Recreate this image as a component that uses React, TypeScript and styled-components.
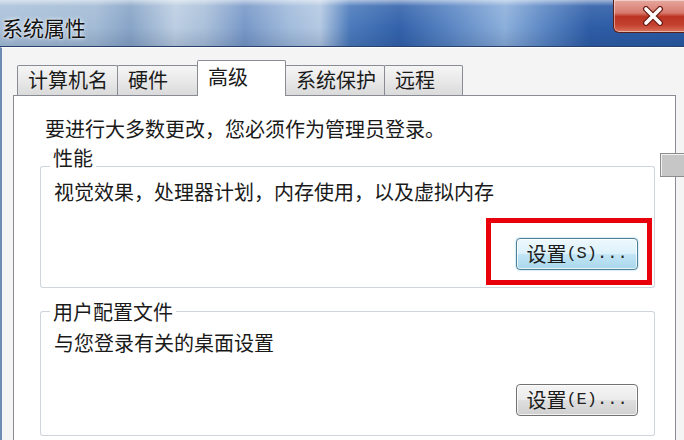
import React from 'react'
import styled, { createGlobalStyle } from 'styled-components'

const CJK = '"Noto Sans CJK SC", "Noto Sans", sans-serif'
const LINE = '#cfd5db'

const GlobalStyle = createGlobalStyle`
  html, body { margin: 0; padding: 0; }
  body { width: 684px; height: 440px; overflow: hidden; background: #f4f4f4; }
`

const Window = styled.div`
  position: relative;
  width: 684px;
  height: 440px;
  overflow: hidden;
  display: flex;
  flex-direction: column;
  background: #f4f4f4;
  font-family: ${CJK};
  color: #1a1a1a;
`

const TitleBar = styled.div`
  flex: none;
  height: 46px;
  display: flex;
  align-items: flex-start;
  border-bottom: 1px solid #27436b;
  background:
    linear-gradient(180deg, rgba(255,255,255,0.55) 0px, rgba(255,255,255,0.1) 6px, rgba(255,255,255,0) 60%, rgba(10,30,70,0.14) 100%),
    linear-gradient(90deg, #abc2da 0px, #a3bbd5 95px, #87a4c7 130px, #bccee2 175px, #aac0da 205px, #7898c8 245px,
      #a2bcdc 290px, #b4c9e2 320px, #4b7abb 350px, #3362ab 400px, #5a86c3 450px, #8cafdb 505px,
      #5a86c3 545px, #2e5da7 590px, #2a59a2 684px);
`

const Title = styled.div`
  margin-top: 14px;
  padding-left: 2px;
  font-size: 21px;
  line-height: 26px;
  color: #111;
  text-shadow: 0 0 5px rgba(255,255,255,0.9), 0 0 2px rgba(255,255,255,0.9);
`

const CloseButton = styled.div`
  box-sizing: border-box;
  margin-left: auto;
  margin-right: -9px;
  width: 80px;
  height: 33px;
  display: flex;
  align-items: center;
  justify-content: center;
  border: 1px solid #5b1f18;
  border-top: none;
  border-radius: 0 0 0 6px;
  background: linear-gradient(180deg, #e7a79e 0%, #d77a6e 40%, #bb3322 52%, #c4412e 78%, #d9745d 100%);
  box-shadow: inset 0 0 0 1px rgba(255,255,255,0.45);
`

const Body = styled.div`
  flex: 1;
  display: flex;
  flex-direction: column;
  border-left: 2px solid #6c8cb3;
  border-top: 1px solid #fdfdfd;
  padding: 12px 0 0 11px;
`

const TabStrip = styled.div`
  flex: none;
  display: flex;
  align-items: flex-end;
  height: 36px;
  padding-left: 4px;
`

const Tab = styled.div<{ $w: number; $active?: boolean }>`
  box-sizing: border-box;
  width: ${({ $w }) => $w}px;
  height: ${({ $active }) => ($active ? 36 : 30)}px;
  margin-bottom: ${({ $active }) => ($active ? 0 : 1)}px;
  margin-left: -1px;
  padding-left: 10px;
  border: 1px solid #898c95;
  border-bottom: none;
  border-radius: 2px 2px 0 0;
  font-size: 20px;
  line-height: ${({ $active }) => ($active ? 32 : 28)}px;
  white-space: nowrap;
  position: relative;
  z-index: ${({ $active }) => ($active ? 2 : 0)};
  background: ${({ $active }) =>
    $active ? '#ffffff' : 'linear-gradient(180deg, #f5f5f5 0%, #e9e9e9 50%, #dadada 100%)'};
  &:first-child { margin-left: 0; }
`

const Panel = styled.div`
  box-sizing: border-box;
  flex: 1;
  width: 663px;
  margin-top: -1px;
  padding: 0 20px 0 26px;
  display: flex;
  flex-direction: column;
  background: #fff;
  border: 1px solid #898c95;
`

const Intro = styled.div`
  margin: 22px 0 0 5px;
  font-size: 20px;
  line-height: 22px;
`

const Group = styled.section<{ $top: number }>`
  flex: none;
  margin-top: ${({ $top }) => $top}px;
  display: flex;
  flex-direction: column;
`

const GroupHead = styled.div`
  display: flex;
  align-items: flex-end;
  height: 22px;
`

const HeadEdge = styled.div<{ $drop: number }>`
  box-sizing: border-box;
  width: 10px;
  height: ${({ $drop }) => $drop}px;
  border-top: 1px solid ${LINE};
  border-left: 1px solid ${LINE};
  border-top-left-radius: 3px;
`

const HeadTail = styled.div<{ $drop: number }>`
  box-sizing: border-box;
  flex: 1;
  height: ${({ $drop }) => $drop}px;
  border-top: 1px solid ${LINE};
  border-right: 1px solid ${LINE};
  border-top-right-radius: 3px;
`

const Legend = styled.div`
  align-self: flex-start;
  padding: 0 3px;
  font-size: 20px;
  line-height: 22px;
  white-space: nowrap;
`

const GroupBody = styled.div<{ $pad: string }>`
  display: flex;
  flex-direction: column;
  padding: ${({ $pad }) => $pad};
  border: 1px solid ${LINE};
  border-top: none;
  border-radius: 0 0 3px 3px;
`

const Note = styled.div`
  font-size: 20px;
  line-height: 22px;
`

const ButtonRow = styled.div<{ $top: number }>`
  display: flex;
  justify-content: flex-end;
  margin-top: ${({ $top }) => $top}px;
`

const Anchor = styled.div`
  position: relative;
  display: flex;
`

const Highlight = styled.div`
  position: absolute;
  top: -20px;
  right: -14px;
  bottom: -15px;
  left: -30px;
  border: 5px solid #e8000b;
  pointer-events: none;
`

const Button = styled.div<{ $focused?: boolean }>`
  box-sizing: border-box;
  width: 122px;
  height: 32px;
  display: flex;
  align-items: center;
  justify-content: center;
  border: 1px solid ${({ $focused }) => ($focused ? '#4f8196' : '#727272')};
  border-radius: 4px;
  font-size: 20px;
  line-height: 22px;
  white-space: nowrap;
  background: ${({ $focused }) =>
    $focused
      ? 'linear-gradient(180deg, #eef8fd 0%, #dcf1fb 48%, #c2e5f5 52%, #a9d7ec 100%)'
      : 'linear-gradient(180deg, #f4f4f4 0%, #ececec 48%, #dedede 52%, #d0d0d0 100%)'};
  box-shadow: inset 0 0 0 1px rgba(255,255,255,0.75)${({ $focused }) => ($focused ? ', 0 0 2px #7cc6e6' : '')};
`

const Mono = styled.span`
  font-family: "Liberation Mono", monospace;
  font-size: 17px;
  color: #222;
`

const Stray = styled.div`
  position: absolute;
  left: 660px;
  top: 153px;
  width: 30px;
  height: 24px;
  box-sizing: border-box;
  background: #c6c6c6;
  border: 1px solid #8c8c8c;
  box-shadow: inset 1px 1px 0 #f2f2f2;
`

const CloseGlyph = () => (
  <svg width="22" height="20" viewBox="0 0 22 20">
    <path d="M4 3 L18 17 M18 3 L4 17" stroke="#6a1d14" strokeWidth="6" strokeLinecap="round" />
    <path d="M4 3 L18 17 M18 3 L4 17" stroke="#ffffff" strokeWidth="3.6" strokeLinecap="round" />
  </svg>
)

const TABS = [
  { label: '计算机名', w: 101 },
  { label: '硬件', w: 81 },
  { label: '高级', w: 89, active: true },
  { label: '系统保护', w: 100 },
  { label: '远程', w: 79 },
]

const App = () => (
  <>
    <GlobalStyle />
    <Window>
      <TitleBar>
        <Title>系统属性</Title>
        <CloseButton>
          <CloseGlyph />
        </CloseButton>
      </TitleBar>
      <Body>
        <TabStrip>
          {TABS.map((t) => (
            <Tab key={t.label} $w={t.w} $active={t.active}>
              {t.label}
            </Tab>
          ))}
        </TabStrip>
        <Panel>
          <Intro>要进行大多数更改，您必须作为管理员登录。</Intro>

          <Group $top={7}>
            <GroupHead>
              <HeadEdge $drop={3} />
              <Legend>性能</Legend>
              <HeadTail $drop={3} />
            </GroupHead>
            <GroupBody $pad="12px 16px 17px 13px">
              <Note>视觉效果，处理器计划，内存使用，以及虚拟内存</Note>
              <ButtonRow $top={35}>
                <Anchor>
                  <Button $focused>
                    设置<Mono>(S)...</Mono>
                  </Button>
                  <Highlight />
                </Anchor>
              </ButtonRow>
            </GroupBody>
          </Group>

          <Group $top={13}>
            <GroupHead>
              <HeadEdge $drop={12} />
              <Legend>用户配置文件</Legend>
              <HeadTail $drop={12} />
            </GroupHead>
            <GroupBody $pad="9px 16px 19px 13px">
              <Note>与您登录有关的桌面设置</Note>
              <ButtonRow $top={30}>
                <Button>
                  设置<Mono>(E)...</Mono>
                </Button>
              </ButtonRow>
            </GroupBody>
          </Group>

          <Group $top={3}>
            <GroupHead>
              <HeadEdge $drop={12} />
              <Legend>启动和故障恢复</Legend>
              <HeadTail $drop={12} />
            </GroupHead>
          </Group>
        </Panel>
      </Body>
      <Stray />
    </Window>
  </>
)

export default App
